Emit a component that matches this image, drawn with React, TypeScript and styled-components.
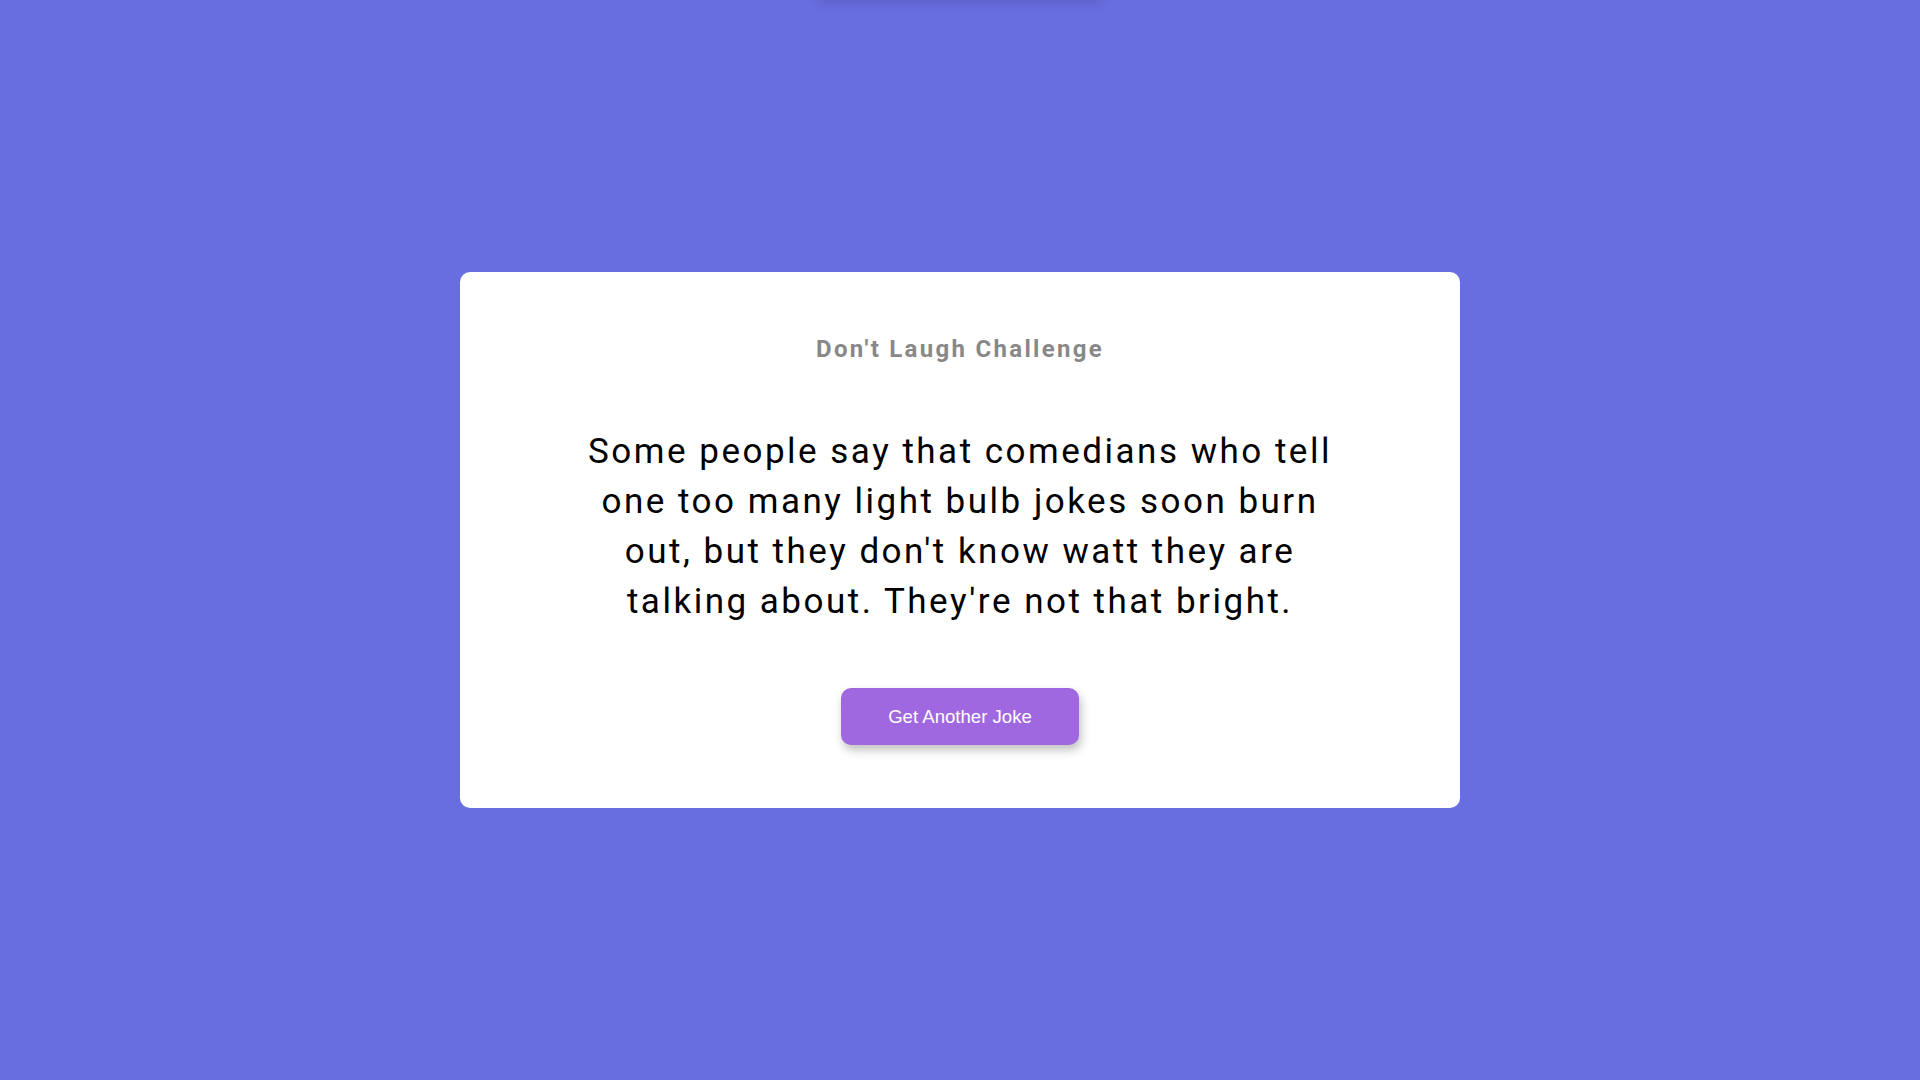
import React from 'react';
import styled, { createGlobalStyle } from 'styled-components';

const GlobalStyle = createGlobalStyle`
  html, body {
    margin: 0;
    padding: 0;
    height: 100%;
  }

  body {
    background: #686de0;
    font-family: 'Roboto', 'Liberation Sans', sans-serif;
    overflow: hidden;
  }

  #root {
    height: 100%;
  }
`;

const Page = styled.div`
  position: relative;
  height: 100vh;
  display: flex;
  align-items: center;
  justify-content: center;
`;

// faint shadow of something sitting just above the viewport
const TopShade = styled.div`
  position: absolute;
  top: -40px;
  left: 50%;
  transform: translateX(-50%);
  width: 280px;
  height: 40px;
  box-shadow: 0 0 12px 2px rgba(0, 0, 0, 0.12);
`;

const Card = styled.div`
  box-sizing: border-box;
  width: 1000px;
  height: 536px;
  padding: 63px 100px 62px;
  background: #ffffff;
  border-radius: 10px;
  display: flex;
  flex-direction: column;
  align-items: center;
`;

const Title = styled.h3`
  margin: 0;
  font-size: 24px;
  line-height: 28px;
  font-weight: 700;
  letter-spacing: 2.3px;
  color: #888888;
`;

const Joke = styled.p`
  margin: 64px 0 0;
  width: 760px;
  font-size: 35px;
  line-height: 50px;
  font-weight: 400;
  letter-spacing: 2.5px;
  text-align: center;
  color: #000000;
`;

const Button = styled.button`
  margin-top: 61px;
  width: 238px;
  height: 57px;
  flex-shrink: 0;
  border: none;
  border-radius: 10px;
  background: #9f68e0;
  color: #ffffff;
  font-family: 'Liberation Sans', Arial, sans-serif;
  font-size: 18.6px;
  cursor: pointer;
  box-shadow: 2px 5px 10px rgba(0, 0, 0, 0.25);
`;

export default function App() {
  return (
    <>
      <GlobalStyle />
      <Page>
        <TopShade />
        <Card>
          <Title>Don't Laugh Challenge</Title>
          <Joke>
            Some people say that comedians who tell one too many light bulb jokes soon burn out, but they don't know watt they are talking about. They're not that bright.
          </Joke>
          <Button>Get Another Joke</Button>
        </Card>
      </Page>
    </>
  );
}
